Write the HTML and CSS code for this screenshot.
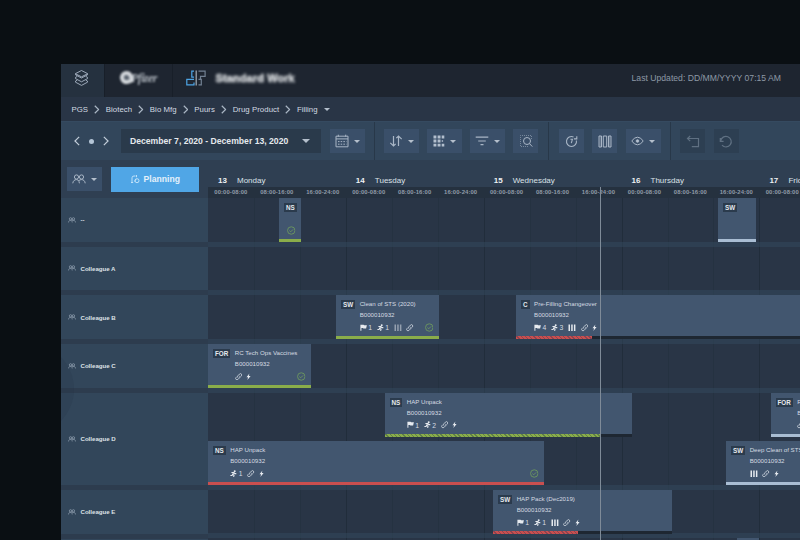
FILE: index.html
```html
<!DOCTYPE html>
<html lang="en">
<head>
<meta charset="utf-8">
<title>Standard Work</title>
<link rel="stylesheet" href="styles.css">
</head>
<body>
<svg class="defs" aria-hidden="true">
  <symbol id="users" viewBox="0 0 14 10"><circle cx="4.5" cy="3" r="2.100"/><circle cx="9.5" cy="3" r="2.100"/><path d="M.8 9.3C1 7 2.400 5.600 4.500 5.600Q6.500 5.600 7 7.500L7.400 9.300M7 6.600C7.500 6 8.300 5.600 9.500 5.600c2.100 0 3.500 1.400 3.700 3.700"/></symbol>
  <symbol id="chev" viewBox="0 0 5 8"><path d="M.7.600 4.200 4 .7 7.400"/></symbol>
  <symbol id="check" viewBox="0 0 8 8"><circle cx="4" cy="4" r="3.500"/><path d="m2.300 4.100 1.200 1.100 2.200-2.200"/></symbol>
  <symbol id="link" viewBox="0 0 7 7"><path d="M2.700 4.300a1.300 1.300 0 0 1 0-1.700L4.200 1a1.250 1.250 0 0 1 1.800 1.800l-.8.8M4.300 2.700a1.300 1.300 0 0 1 0 1.700L2.800 6A1.250 1.250 0 0 1 1 4.200l.8-.8"/></symbol>
  <symbol id="bolt" viewBox="0 0 5 7"><path d="M3.400.200.500 4h1.600L1.400 6.800l3.200-4H2.800z"/></symbol>
  <symbol id="flag" viewBox="0 0 7 7"><path d="M.4.600h3.200l.5.500h2.800L6.100 4.200H3.400l-.5-.5H1.400V6.600H.4z"/></symbol>
  <symbol id="run" viewBox="0 0 7 7"><circle cx="4.700" cy="1" r="1"/><path class="limb" d="M1.400 2.300h2.300L2.700 4 4 4.900 3.600 6.600M2.700 4 2 5.200H.4M3.800 2.300l1 1.100h1.500"/></symbol>
  <symbol id="cols" viewBox="0 0 8 7"><path d="M.5.300h1.500v6.400H.5zM3.200.3h1.500v6.400H3.200zM5.900.3h1.500v6.400H5.900z"/></symbol>
</svg>

<div class="app">
  <header class="top">
    <div class="tab tab-menu">
      <svg class="ico" width="15" height="17" viewBox="0 0 15 17"><path d="M7.500 1.500 13.500 4.600v1.200L7.500 9 1.500 5.800V4.600zM1.500 4.800l6 3 6-3M3.200 7.400 1.500 8.400v1.200l6 3.200 6-3.200V8.400l-1.700-1M3.200 11.200l-1.700.9v1.100l6 3.200 6-3.200v-1.100l-1.700-.9"/></svg>
    </div>
    <div class="tab tab-brand"><span class="mark"></span><span class="brand">Pfizer</span></div>
    <div class="tab-title">
      <svg width="20" height="17" viewBox="0 0 20 17" fill="none" stroke-width="1.200"><path stroke="#4da4e4" d="M8 1.200H5.800V7.200H8M8 9.300H.8v5.500H8v-2.400"/><path stroke="#718092" d="M12.500 1.200h6.600v5.200h-4.600v2.400M12.500 9.300h2.800v5.500h-2.800"/><path stroke="#a3adb8" d="M10.200.5v15"/></svg>
      <span class="title">Standard Work</span>
    </div>
    <span class="updated">Last Updated: DD/MM/YYYY 07:15 AM</span>
  </header>

  <nav class="crumbs">
    <span>PGS</span><svg><use href="#chev"/></svg><span>Biotech</span><svg><use href="#chev"/></svg><span>Bio Mfg</span><svg><use href="#chev"/></svg><span>Puurs</span><svg><use href="#chev"/></svg><span>Drug Product</span><svg><use href="#chev"/></svg><span>Filling</span><i class="caret"></i>
  </nav>

  <div class="toolbar">
    <div class="group g-date">
      <div class="pager"><svg class="prev"><use href="#chev"/></svg><i class="dot"></i><svg><use href="#chev"/></svg></div>
      <div class="range"><b>December 7, 2020 - December 13, 2020</b><i class="caret big"></i></div>
      <div class="btn wide"><svg class="ico" width="14" height="14" viewBox="0 0 14 14"><path d="M1 2.200h12v10.600H1zM1 4.900h12M3.300.7v2M10.700.7v2"/><path stroke-dasharray="1.500 1.200" d="M3 7.600h8.500M3 10.200h8.500"/></svg><i class="caret"></i></div>
    </div>
    <div class="group g-view">
      <div class="btn wide"><svg class="ico" width="14" height="14" viewBox="0 0 14 14"><path stroke-width="1.200" d="M4.500 2v10M1.300 8.800l3.200 3.200L6.700 9.800M9.500 12V2M7.300 4.200 9.500 2l3.200 3.200"/></svg><i class="caret"></i></div>
      <div class="btn wide"><svg class="solid" width="12" height="12" viewBox="0 0 12 12"><path d="M.5.500h2.900v2.900H.5zM4.600.5h2.900v2.900H4.600zM8.700.5h2.600v2.900H8.700zM.5 4.600h2.900v2.900H.5zM4.600 4.600h2.900v2.900H4.600zM8.700 5.300h1.400v1.400H8.700zM.5 8.700h2.900v2.900H.5zM4.600 8.700h2.900v2.900H4.600zM8.700 8.700h2.600v2.900H8.700z"/></svg><i class="caret"></i></div>
      <div class="btn wide"><svg class="ico" width="14" height="12" viewBox="0 0 14 12"><path stroke-width="1.200" d="M.7 2.200h12.600M3.200 6h7.600M5.500 9.700h3"/></svg><i class="caret"></i></div>
      <div class="btn"><svg class="ico" width="14" height="14" viewBox="0 0 14 14"><path stroke-dasharray="1 1" stroke-width=".8" opacity=".7" d="M9 12.500H1.500v-11h11V6"/><circle cx="8" cy="7" r="3.500"/><path d="m10.500 9.600 2.800 3"/></svg></div>
    </div>
    <div class="group g-mode">
      <div class="btn"><svg class="ico" width="13" height="13" viewBox="0 0 13 13"><path stroke-width="1.100" d="M8.500 1.900a5 5 0 1 0 2.900 3.600M8.900 3.900h2.900V1.200M5.400 4.300h2L6.300 8.200"/></svg></div>
      <div class="btn"><svg class="ico" width="14" height="13" viewBox="0 0 14 13"><path d="M1 1h2.500v11H1zM5.300 1h3.400v11H5.300zM10.500 1H13v11h-2.500z"/><path opacity=".5" d="M2.200 1v11M11.800 1v11"/></svg></div>
      <div class="btn wide"><svg class="ico" width="13" height="10" viewBox="0 0 13 10"><path d="M.8 5Q3.200 1.200 6.500 1.200T12.200 5Q9.800 8.800 6.500 8.800T.8 5z"/><circle cx="6.500" cy="5" r="1.300" fill="#b9c4d2"/></svg><i class="caret"></i></div>
    </div>
    <div class="group g-undo">
      <div class="btn off"><svg class="ico" width="14" height="13" viewBox="0 0 14 13"><path stroke-width="1.200" d="M4.200 1 1.500 3.500l2.700 2.600M1.500 3.500h11v8.100H5.800"/></svg></div>
      <div class="btn off"><svg class="ico" width="14" height="13" viewBox="0 0 14 13"><path stroke-width="1.200" d="M1.300 3v3.300h3.300M1.700 6A5.300 5.300 0 1 1 3 10.200"/></svg></div>
    </div>
  </div>

  <div class="timehead">
    <div class="actions">
      <div class="btn wide"><svg class="ico" width="14" height="10"><use href="#users"/></svg><i class="caret"></i></div>
      <div class="primary"><svg width="10" height="10" viewBox="0 0 10 10"><path d="M2 8.500V3.800Q2 2 4 2h1.500M1 8.500h2.200M6.500 1v2.200M4.500 7.500 6 5"/><circle cx="7" cy="6.700" r="2"/></svg>Planning</div>
    </div>
    <div class="days">
      <div class="day"><div class="name"><b>13</b>Monday</div><div class="hours"><span>00:00-08:00</span><span>08:00-16:00</span><span>16:00-24:00</span></div></div>
      <div class="day"><div class="name"><b>14</b>Tuesday</div><div class="hours"><span>00:00-08:00</span><span>08:00-16:00</span><span>16:00-24:00</span></div></div>
      <div class="day"><div class="name"><b>15</b>Wednesday</div><div class="hours"><span>00:00-08:00</span><span>08:00-16:00</span><span>16:00-24:00</span></div></div>
      <div class="day"><div class="name"><b>16</b>Thursday</div><div class="hours"><span>00:00-08:00</span><span>08:00-16:00</span><span>16:00-24:00</span></div></div>
      <div class="day"><div class="name"><b>17</b>Friday</div><div class="hours"><span>00:00-08:00</span></div></div>
    </div>
  </div>

  <main class="board">
    <div class="people">
      <div class="person"><svg><use href="#users"/></svg>--</div>
      <div class="person"><svg><use href="#users"/></svg>Colleague A</div>
      <div class="person"><svg><use href="#users"/></svg>Colleague B</div>
      <div class="person"><svg><use href="#users"/></svg>Colleague C</div>
      <div class="person double"><svg><use href="#users"/></svg>Colleague D</div>
      <div class="person"><svg><use href="#users"/></svg>Colleague E</div>
      <div class="person"></div>
    </div>
    <div class="lanes">
      <div class="lane">
        <article class="task" style="--gap:71px;--len:22px"><b class="tag">NS</b><svg class="ok"><use href="#check"/></svg><i class="bar green"></i></article>
        <article class="task" style="--gap:417px;--len:38px"><b class="tag">SW</b><i class="bar pale"></i></article>
      </div>
      <div class="lane"></div>
      <div class="lane">
        <article class="task" style="--gap:128px;--len:102.500px"><b class="tag">SW</b><div class="info"><p>Clean of STS (2020)</p><p>B000010932</p><div class="meta"><svg><use href="#flag"/></svg><em>1</em><svg><use href="#run"/></svg><em>1</em><svg class="c dim"><use href="#cols"/></svg><svg class="l"><use href="#link"/></svg></div></div><svg class="ok"><use href="#check"/></svg><i class="bar green"></i></article>
        <article class="task" style="--gap:77.500px;--len:300px;--done:75.500px"><b class="tag">C</b><div class="info"><p>Pre-Filling Changeover</p><p>B000010932</p><div class="meta"><svg><use href="#flag"/></svg><em>4</em><svg><use href="#run"/></svg><em>3</em><svg class="c"><use href="#cols"/></svg><svg class="l"><use href="#link"/></svg><svg class="b"><use href="#bolt"/></svg></div></div><i class="bar part red"></i></article>
      </div>
      <div class="lane">
        <article class="task" style="--gap:0px;--len:103px"><b class="tag">FOR</b><div class="info"><p>RC Tech Ops Vaccines</p><p>B000010932</p><div class="meta"><svg class="l"><use href="#link"/></svg><svg class="b"><use href="#bolt"/></svg></div></div><svg class="ok"><use href="#check"/></svg><i class="bar green"></i></article>
      </div>
      <div class="lane first">
        <article class="task" style="--gap:176.500px;--len:247.500px;--done:215.500px"><b class="tag">NS</b><div class="info"><p>HAP Unpack</p><p>B000010932</p><div class="meta"><svg><use href="#flag"/></svg><em>1</em><svg><use href="#run"/></svg><em>2</em><svg class="l"><use href="#link"/></svg><svg class="b"><use href="#bolt"/></svg></div></div><i class="bar part green"></i></article>
        <article class="task" style="--gap:138.500px;--len:120px"><b class="tag">FOR</b><div class="info"><p>RC Tech Ops</p><p>B000010932</p><div class="meta"><svg class="l"><use href="#link"/></svg><svg class="b"><use href="#bolt"/></svg></div></div><i class="bar pale"></i></article>
      </div>
      <div class="lane">
        <article class="task" style="--gap:0px;--len:336px"><b class="tag">NS</b><div class="info"><p>HAP Unpack</p><p>B000010932</p><div class="meta"><svg><use href="#run"/></svg><em>1</em><svg class="l"><use href="#link"/></svg><svg class="b"><use href="#bolt"/></svg></div></div><svg class="ok"><use href="#check"/></svg><i class="bar red"></i></article>
        <article class="task" style="--gap:182px;--len:120px"><b class="tag">SW</b><div class="info"><p>Deep Clean of STS</p><p>B000010932</p><div class="meta"><svg class="c"><use href="#cols"/></svg><svg class="l"><use href="#link"/></svg><svg class="b"><use href="#bolt"/></svg></div></div><i class="bar pale"></i></article>
      </div>
      <div class="lane">
        <article class="task" style="--gap:285px;--len:178.500px;--done:85px"><b class="tag">SW</b><div class="info"><p>HAP Pack (Dec2019)</p><p>B000010932</p><div class="meta"><svg><use href="#flag"/></svg><em>1</em><svg><use href="#run"/></svg><em>1</em><svg class="c"><use href="#cols"/></svg><svg class="l"><use href="#link"/></svg><svg class="b"><use href="#bolt"/></svg></div></div><i class="bar part red"></i></article>
      </div>
      <div class="lane">
        <article class="task" style="--gap:529px;--len:22px"></article>
      </div>
    </div>
  </main>
  <div class="now"></div>
  <div class="halo"></div>
</div>
</body>
</html>
```
FILE: styles.css
```css
* { box-sizing: border-box; }
body {
  margin: 0;
  padding: 64px 0 0 61px;
  height: 540px;
  overflow: hidden;
  background: #0a0f13;
  color: #d3dae2;
  font-family: "Liberation Sans", Arial, sans-serif;
}
svg { flex: none; display: block; }
.defs { position: absolute; width: 0; height: 0; }
.app { position: relative; width: 739px; height: 476px; overflow: hidden; background: #2e3d4f; }
.ico { fill: none; stroke: #a9b6c6; stroke-width: 1; }
.solid { fill: #b3bfce; }
.caret { flex: none; width: 0; height: 0; border: 3px solid transparent; border-top: 3px solid #b4bfcc; border-bottom: 0; }
.caret.big { border-width: 4px; border-top-width: 4px; border-bottom: 0; }

/* title bar */
.top { display: flex; height: 33px; background: #1e2530; }
.tab { display: flex; align-items: center; border-right: 1px solid #181f29; }
.tab-menu { width: 44px; padding: 0 0 6px 13px; background: #25313f; }
.tab-menu .ico { stroke-width: .9; }
.tab-brand { width: 67px; padding: 0 0 6px 15px; filter: blur(1.3px); border: 0; }
.mark { flex: none; width: 13px; height: 13px; border-radius: 50% 50% 30% 50%; border: 4px solid #d3d7db; transform: rotate(-15deg); background: #59626e; }
.brand { font: italic bold 12px "Liberation Serif", serif; color: #aeb4bc; margin: 1px 0 0 -2px; letter-spacing: -.6px; }
.tab-title { flex: 1; display: flex; align-items: center; gap: 9.500px; padding: 0 0 5px 13px; border-left: 1px solid #181f29; }
.title { font-size: 11px; font-weight: bold; color: #dfe2e5; filter: blur(1.4px); letter-spacing: .1px; -webkit-text-stroke: .4px #dfe2e5; }
.updated { padding: 9px 19px 0 0; font-size: 8.65px; line-height: 10px; color: #8d98a5; }

/* breadcrumbs */
.crumbs { display: flex; align-items: center; height: 24px; padding: 1px 0 0 10.500px; background: #293546; font-size: 7.8px; letter-spacing: .05px; }
.crumbs svg { width: 5.500px; height: 9px; margin: 0 6.1px; fill: none; stroke: #a9b5c3; stroke-width: 1.1; }
.crumbs .caret { margin-left: 6px; }

/* toolbar */
.toolbar { display: flex; height: 39px; background: #32465b; border-top: 1px solid #354a60; }
.group { display: flex; align-items: center; gap: 8px; border-right: 1px solid #283849; padding: 0 9px; }
.g-date { width: 314px; padding-left: 12.500px; gap: 9.500px; }
.g-view { width: 174px; }
.g-mode { width: 122px; padding-left: 9.500px; gap: 8.500px; }
.g-undo { border: 0; gap: 8.500px; }
.pager { display: flex; align-items: center; gap: 9px; width: 37.500px; }
.pager svg { width: 6px; height: 10px; overflow: visible; fill: none; stroke: #c3ceda; stroke-width: 1; }
.pager .prev { transform: scaleX(-1); }
.dot { width: 5px; height: 5px; border-radius: 50%; background: #b4c5d6; }
.range { display: flex; align-items: center; justify-content: space-between; width: 200px; height: 24px; padding: 0 10.500px 0 9.500px; background: #2a3a4b; font-size: 8.64px; color: #e5e9ed; white-space: nowrap; }
.btn { display: flex; align-items: center; justify-content: center; width: 25px; height: 24px; background: #3a4f69; }
.btn.wide { width: 35px; gap: 4.500px; }
.btn.off { background: #2d3f52; }
.btn.off .ico { stroke: #5f7082; }

/* time scale */
.timehead { display: flex; height: 38px; background: #2f3f52; }
.actions { display: flex; align-items: flex-start; flex: none; gap: 9px; width: 147px; padding: 7px 0 0 6px; }
.primary { display: flex; align-items: center; justify-content: center; gap: 3.500px; width: 88px; height: 24.500px; background: #50a6e6; color: #e4f1fb; font-size: 8.6px; font-weight: bold; }
.primary svg { fill: none; stroke: #c9e6fb; stroke-width: .9; }
.days { display: flex; }
.day { flex: none; width: 137.85px; }
.name { display: flex; gap: 10px; height: 27px; padding: 16px 0 0 10px; font-size: 8px; line-height: 9px; color: #dce2e8; }
.name b { width: 9px; color: #eef1f4; }
.hours { display: flex; height: 11px; background: #25313f; }
.hours span { flex: none; width: 45.95px; padding-left: 6.300px; font-size: 5.9px; line-height: 11px; font-weight: bold; color: #909ba8; letter-spacing: .1px; }

/* schedule */
.board { display: flex; }
.people { flex: none; width: 147px; }
.person { display: flex; align-items: center; gap: 4.500px; height: 48.65px; padding: 0 0 0 7px; border-bottom: 5px solid #2d3c4e; background: #32465a; font-size: 6.1px; font-weight: bold; color: #dde2e7; }
.person.double { height: 97.3px; }
.person svg { width: 8px; height: 6px; fill: none; stroke: #a0afbf; stroke-width: 1.100; }
.lanes {
  flex: 1;
  min-width: 0;
  background:
    repeating-linear-gradient(90deg, transparent 0 136.85px, #212d3b 136.85px 137.85px) 1px 0,
    repeating-linear-gradient(90deg, transparent 0 44.95px, #253241 44.95px 45.95px) 1px 0,
    #293546;
}
.lane { display: flex; height: 48.65px; border-bottom: 5px solid rgba(52, 74, 94, .5); }
.lane.first { border-bottom-color: transparent; }
.task { display: flex; flex: none; position: relative; width: var(--len); height: 44px; margin-left: var(--gap); padding: 5px 0 0 5px; background: #42566f; white-space: nowrap; overflow: hidden; }
.tag { flex: none; height: 9px; padding: 0 2px; background: #2b3b4d; color: #e6eaee; font-size: 6.3px; line-height: 9.500px; }
.info { margin-left: 4.500px; font-size: 6.15px; color: #d5dbe2; }
.info p { margin: 0 0 4px; line-height: 7px; }
.meta { display: flex; align-items: center; height: 8px; margin-top: 5.500px; fill: #e6eaef; font-size: 6.8px; }
.meta svg { width: 7px; height: 7.500px; }
.meta em { width: 4px; margin: 0 4.500px 0 1.500px; font-style: normal; }
.meta .c { width: 8px; margin-right: 4.500px; }
.meta .l { width: 7.500px; margin-right: 4.200px; fill: none; stroke: #d3dae2; stroke-width: .8; }
.meta .b { width: 5px; }
.meta .dim { opacity: .5; }
.limb { fill: none; stroke: #e6eaef; stroke-width: 1.1; }
.ok { position: absolute; right: 5.500px; bottom: 7px; width: 8.500px; height: 9px; fill: none; stroke: #6f9c5e; stroke-width: .8; }
.bar { position: absolute; left: 0; right: 0; bottom: 0; height: 3px; background: var(--c); }
.green { --c: #8aad4a; --d: #5f7f48; }
.red { --c: #c94f4f; --d: #8c4450; }
.pale { --c: #a9bdd3; }
.bar.part { background: linear-gradient(#1e2732, #1e2732) right top / calc(100% - var(--done)) 100% no-repeat, repeating-linear-gradient(45deg, var(--c) 0 2px, var(--d) 2px 3px); }
.now { position: absolute; left: 539px; top: 123px; bottom: 0; width: 1px; background: #7f8b98; }
.halo { position: absolute; left: -79px; top: 279px; width: 92px; height: 92px; border-radius: 50%; background: rgba(36, 50, 68, .2); }
```
